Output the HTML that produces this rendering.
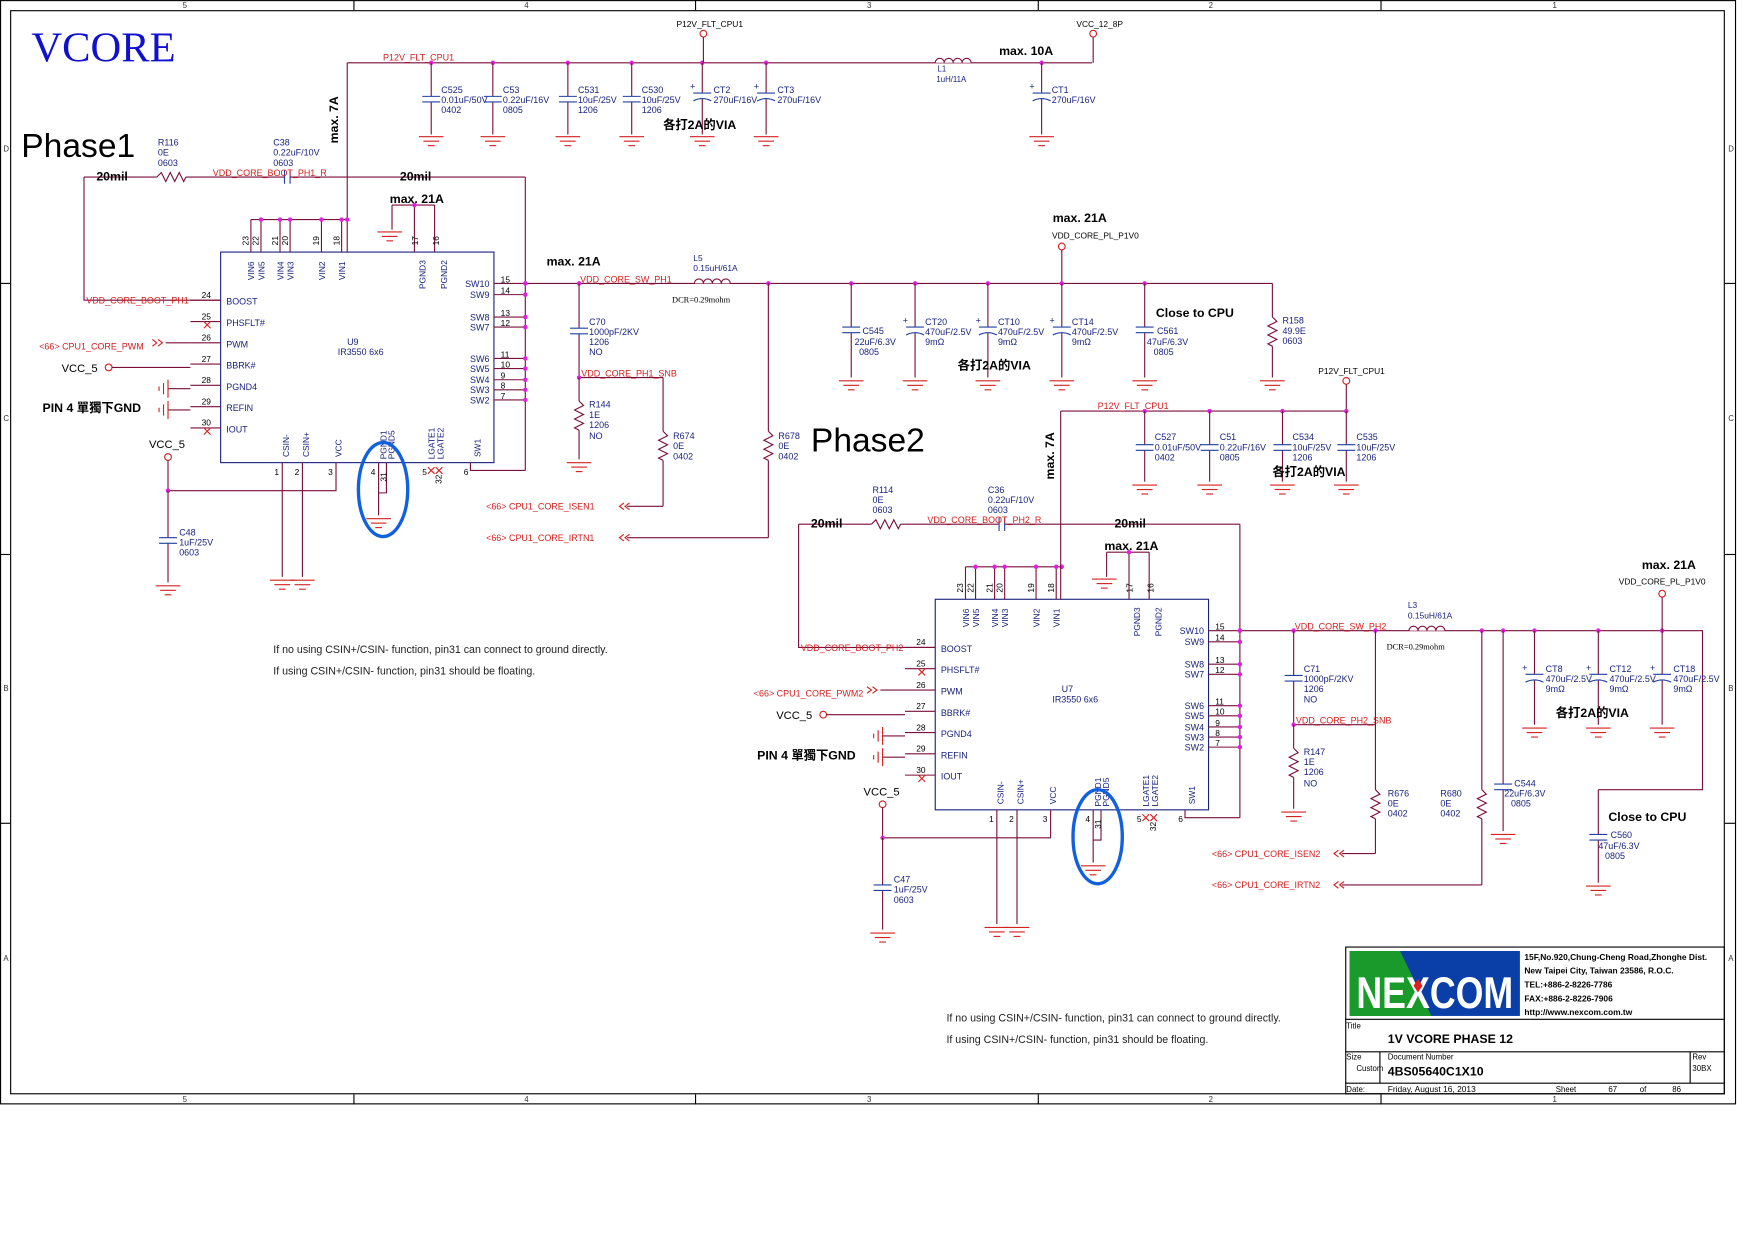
<!DOCTYPE html>
<html><head><meta charset="utf-8">
<style>
html,body{margin:0;padding:0;background:#fff;width:1754px;height:1240px;overflow:hidden}
svg{display:block}
text{font-family:"Liberation Sans","Noto Sans CJK TC",sans-serif}
</style></head>
<body>
<svg id="s" width="1754" height="1240" viewBox="0 0 1566 1107" xmlns="http://www.w3.org/2000/svg"></svg>
<script>
const S=[];
const WC='#7a0f3a',BL='#1a237e',RD='#d42020',MG='#e020e0';
function L(c,...p){let pts=[];for(let i=0;i<p.length;i+=2)pts.push(p[i]+','+p[i+1]);S.push(`<polyline points="${pts.join(' ')}" fill="none" stroke="${c||WC}" stroke-width="1"/>`);}
function W(...p){L(WC,...p);}
function D(x,y){S.push(`<circle cx="${x}" cy="${y}" r="2" fill="${MG}"/>`);}
function T(x,y,s,sz=8,c=BL,w='normal',a='start',f=''){S.push(`<text x="${x}" y="${y}" font-size="${sz}" fill="${c}" font-weight="${w}" text-anchor="${a}" ${f}>${s}</text>`);}
function R(x,y,s,sz=8,c=BL,w='normal'){S.push(`<text x="${x}" y="${y}" font-size="${sz}" fill="${c}" font-weight="${w}" transform="rotate(-90 ${x} ${y})">${s}</text>`);}
function G(x,y){L(RD,x-11,y,x+11,y);L(RD,x-7,y+4,x+7,y+4);L(RD,x-3,y+8,x+3,y+8);}
function CAP(x,y1,y2,ym,pol){W(x,y1,x,ym);W(x,ym+5,x,y2);L('#2040a0',x-8,ym,x+8,ym);
 if(pol){S.push(`<path d="M${x-8} ${ym+7} Q${x} ${ym+3} ${x+8} ${ym+7}" fill="none" stroke="#2040a0"/>`);T(x-11,ym-3,'+',8,BL);}
 else L('#2040a0',x-8,ym+5,x+8,ym+5);}
function RES(x,y1,y2,ym){W(x,y1,x,ym);let p=[x,ym];for(let i=1;i<=6;i++)p.push(x+(i%2?4:-4),ym+i*4);p.push(x,ym+26);L(WC,...p);W(x,ym+26,x,y2);}
function PORT(x,y){S.push(`<circle cx="${x}" cy="${y}" r="3" fill="none" stroke="${RD}"/>`);}
function X(x,y){L(RD,x-3,y-3,x+3,y+3);L(RD,x-3,y+3,x+3,y-3);}
function CAPT(x,y,a,b,c){T(x,y,a);T(x,y+9,b);if(c)T(x,y+18,c);}

S.push(`<rect x="0.5" y="0.5" width="1549" height="985" fill="none" stroke="#000"/>`);
S.push(`<rect x="9.5" y="9.5" width="1530" height="967" fill="none" stroke="#000"/>`);
[['5',165],['4',470],['3',776],['2',1081],['1',1388]].forEach(([t,x])=>{T(x,7,t,7,'#333','normal','middle');T(x,984,t,7,'#333','normal','middle');});
[316,621,927,1233].forEach(x=>{L('#000',x,0,x,9);L('#000',x,977,x,986);});
[['D',135],['C',376],['B',617],['A',858]].forEach(([t,y])=>{T(3,y,t,7,'#333');T(1543,y,t,7,'#333');});
[253,495,735].forEach(y=>{L('#000',0,y,9,y);L('#000',1540,y,1549,y);});

T(28,55,'VCORE',38,'#1010d0','normal','start','style="font-family:\'Liberation Serif\',serif"');
T(19,140,'Phase1',30,'#000');
T(724,403,'Phase2',30,'#000');

W(310,56,975,56);W(310,56,310,225);
R(302,128,'max. 7A',11,'#000','bold');
T(342,54,'P12V_FLT_CPU1',8,RD);
[[385,'C525','0.01uF/50V','0402'],[440,'C53','0.22uF/16V','0805'],[507,'C531','10uF/25V','1206'],[564,'C530','10uF/25V','1206']].forEach(([x,a,b,c])=>{D(x,56);CAP(x,56,120,86);G(x,122);CAPT(x+9,83,a,b,c);});
[[627,'CT2','270uF/16V'],[684,'CT3','270uF/16V']].forEach(([x,a,b])=>{D(x,56);CAP(x,56,120,83,1);G(x,122);CAPT(x+10,83,a,b);});
T(592,115,'各打2A的VIA',11,'#000','bold');
PORT(628,30);W(628,33,628,56);T(604,24,'P12V_FLT_CPU1',7.5,'#000');
PORT(976,30);W(976,33,976,56);T(961,24,'VCC_12_8P',7.5,'#000');
S.push(`<path d="M835 56 a4 4 0 0 1 8 0 a4 4 0 0 1 8 0 a4 4 0 0 1 8 0 a4 4 0 0 1 8 0" fill="#fff" stroke="${WC}"/>`);
T(837,64,'L1',7);T(836,73,'1uH/11A',7);
T(892,49,'max. 10A',11,'#000','bold');
D(930,56);CAP(930,56,120,83,1);G(930,122);CAPT(939,83,'CT1','270uF/16V');

function phase(ox,oy,n){
 const x=v=>v+ox,y=v=>v+oy;
 W(x(75),y(158),x(140),y(158));
 let p=[x(140),y(158)];for(let i=1;i<=6;i++)p.push(x(140)+i*4,y(158)+(i%2?-4:4));p.push(x(166),y(158));L(WC,...p);
 W(x(166),y(158),x(254),y(158));L('#2040a0',x(254),y(152),x(254),y(164));L('#2040a0',x(259),y(152),x(259),y(164));
 W(x(259),y(158),x(469),y(158));
 CAPT(x(141),y(130),n.r,'0E','0603');CAPT(x(244),y(130),n.c,'0.22uF/10V','0603');
 T(x(190),y(157),n.boot+'_R',8,RD);
 T(x(86),y(161),'20mil',11,'#000','bold');T(x(357),y(161),'20mil',11,'#000','bold');
 W(x(75),y(158),x(75),y(268),x(197),y(268));T(x(77),y(271),n.boot,8,RD);
 S.push(`<rect x="${x(197)}" y="${y(225)}" width="244" height="188" fill="none" stroke="${BL}"/>`);
 T(x(315),y(308),n.u,8,BL,'normal','middle');T(x(322),y(317),'IR3550 6x6',8,BL,'normal','middle');
 W(x(224),y(196),x(310),y(196));
 [[224,'23','VIN6'],[233,'22','VIN5'],[250,'21','VIN4'],[259,'20','VIN3'],[287,'19','VIN2'],[305,'18','VIN1']].forEach(([px,nm,lb])=>{W(x(px),y(196),x(px),y(225));if(px>224)D(x(px),y(196));R(x(px)-2,y(219),nm,7.5,'#000');R(x(px)+3,y(250),lb,7.5,BL);});
 D(x(310),y(196));
 W(x(350),y(183),x(388),y(183));W(x(370),y(183),x(370),y(225));W(x(388),y(183),x(388),y(225));D(x(370),y(183));
 W(x(350),y(183),x(350),y(205));G(x(348),y(207));
 R(x(373),y(219),'17',7.5,'#000');R(x(392),y(219),'16',7.5,'#000');
 R(x(380),y(258),'PGND3',7.5,BL);R(x(399),y(258),'PGND2',7.5,BL);
 T(x(348),y(181),'max. 21A',11,'#000','bold');
 W(x(469),y(158),x(469),y(420));
 [[253,'SW10','15'],[263,'SW9','14'],[283,'SW8','13'],[292,'SW7','12'],[320,'SW6','11'],[329,'SW5','10'],[339,'SW4','9'],[348,'SW3','8'],[357,'SW2','7']].forEach(([py,lb,nm])=>{W(x(441),y(py),x(469),y(py));D(x(469),y(py));T(x(437),y(py+3),lb,8,BL,'normal','end');T(x(447),y(py-1),nm,7.5,'#000');});
 W(x(420),y(413),x(420),y(420),x(469),y(420));T(x(414),y(424),'6',7.5,'#000');R(x(429),y(408),'SW1',7.5,BL);
 [[268,'24','BOOST'],[287,'25','PHSFLT#'],[306,'26','PWM'],[325,'27','BBRK#'],[344,'28','PGND4'],[363,'29','REFIN'],[382,'30','IOUT']].forEach(([py,nm,lb])=>{W(x(170),y(py),x(197),y(py));T(x(180),y(py-2),nm,7.5,'#000');T(x(202),y(py+4),lb,8,BL);});
 X(x(185),y(290));X(x(185),y(385));
 W(x(148),y(306),x(170),y(306));T(x(35),y(312),'&lt;66&gt;   '+n.pwm,8,RD);
 L(RD,x(136),y(303),x(140),y(306),x(136),y(309));L(RD,x(141),y(303),x(145),y(306),x(141),y(309));
 T(x(55),y(332),'VCC_5',10,'#000');PORT(x(97),y(328));W(x(100),y(328),x(170),y(328));
 [[347],[366]].forEach(([py])=>{W(x(150),y(py),x(170),y(py));L(RD,x(150),y(py-8),x(150),y(py+8));L(RD,x(146),y(py-5),x(146),y(py+5));L(RD,x(142),y(py-2),x(142),y(py+2));});
 T(x(38),y(368),'PIN 4 單獨下GND',11,'#000','bold');
 T(x(133),y(400),'VCC_5',10,'#000');PORT(x(150),y(408));W(x(150),y(411),x(150),y(438),x(300),y(438),x(300),y(413));D(x(150),y(438));
 CAP(x(150),y(438),y(520),y(480));G(x(150),y(523));CAPT(x(160),y(478),n.cv,'1uF/25V','0603');
 W(x(252),y(413),x(252),y(515));W(x(270),y(413),x(270),y(515));G(x(252),y(518));G(x(270),y(518));
 T(x(245),y(424),'1',7.5,'#000');T(x(263),y(424),'2',7.5,'#000');T(x(293),y(424),'3',7.5,'#000');
 R(x(258),y(408),'CSIN-',7.5,BL);R(x(276),y(408),'CSIN+',7.5,BL);R(x(305),y(408),'VCC',7.5,BL);
 W(x(338),y(413),x(338),y(460));W(x(345),y(413),x(345),y(440),x(338),y(440));G(x(338),y(463));
 T(x(331),y(424),'4',7.5,'#000');R(x(345),y(430),'31',7.5,'#000');
 R(x(345),y(410),'PGND1',7.5,BL);R(x(352),y(410),'PGND5',7.5,BL);
 X(x(385),y(420));X(x(392),y(420));T(x(377),y(424),'5',7.5,'#000');R(x(394),y(432),'32',7.5,'#000');
 R(x(388),y(410),'LGATE1',7.5,BL);R(x(396),y(410),'LGATE2',7.5,BL);
 S.push(`<ellipse cx="${x(342)}" cy="${y(437)}" rx="22" ry="42" fill="none" stroke="#1060e0" stroke-width="3"/>`);
}
phase(0,0,{r:'R116',c:'C38',boot:'VDD_CORE_BOOT_PH1',u:'U9',pwm:'CPU1_CORE_PWM',cv:'C48'});
phase(638,310,{r:'R114',c:'C36',boot:'VDD_CORE_BOOT_PH2',u:'U7',pwm:'CPU1_CORE_PWM2',cv:'C47'});

function inductor(x,y){S.push(`<path d="M${x} ${y} a4 4 0 0 1 8 0 a4 4 0 0 1 8 0 a4 4 0 0 1 8 0 a4 4 0 0 1 8 0" fill="#fff" stroke="${WC}"/>`);}
const SER='style="font-family:\'Liberation Serif\',serif"';
W(469,253,1136,253);inductor(620,253);
T(619,233,'L5',7.5);T(619,242,'0.15uH/61A',7.5);T(600,270,'DCR=0.29mohm',7.5,'#000','normal','start',SER);
T(518,252,'VDD_CORE_SW_PH1',8,RD);T(488,237,'max. 21A',11,'#000','bold');
D(469,253);D(517,253);D(686,253);
CAP(517,253,335,293);T(526,290,'C70');T(526,299,'1000pF/2KV');T(526,308,'1206');T(526,317,'NO');
W(517,337,592,337);T(519,336,'VDD_CORE_PH1_SNB',8,RD);D(517,337);
RES(517,337,410,358);G(517,413);CAPT(526,364,'R144','1E','1206');T(526,392,'NO');
RES(592,337,452,385);W(592,452,560,452);CAPT(601,392,'R674','0E','0402');
RES(686,253,480,385);W(686,480,560,480);CAPT(695,392,'R678','0E','0402');
function arrowL(x,y){L(RD,x+4,y-3,x,y,x+4,y+3);L(RD,x+9,y-3,x+5,y,x+9,y+3);}
arrowL(553,452);arrowL(553,480);
T(434,455,'&lt;66&gt;   CPU1_CORE_ISEN1',8,RD);T(434,483,'&lt;66&gt;   CPU1_CORE_IRTN1',8,RD);
PORT(948,220);W(948,223,948,253);T(964,198,'max. 21A',11,'#000','bold','middle');T(978,213,'VDD_CORE_PL_P1V0',7.5,'#000','normal','middle');
D(760,253);CAP(760,253,337,292);G(760,340);T(770,298,'C545');T(763,308,'22uF/6.3V');T(767,317,'0805');
[[817,'CT20'],[882,'CT10'],[948,'CT14']].forEach(([x,a])=>{D(x,253);CAP(x,253,337,292,1);G(x,340);CAPT(x+9,290,a,'470uF/2.5V','9mΩ');});
T(855,330,'各打2A的VIA',11,'#000','bold');
D(1022,253);CAP(1022,253,337,292);G(1022,340);T(1033,298,'C561');T(1024,308,'47uF/6.3V');T(1030,317,'0805');
T(1032,283,'Close to CPU',11,'#000','bold');
RES(1136,253,337,283);G(1136,340);CAPT(1145,289,'R158','49.9E','0603');

W(947,367,1202,367);W(947,367,947,535);R(941,428,'max. 7A',11,'#000','bold');
T(980,365,'P12V_FLT_CPU1',8,RD);PORT(1202,340);W(1202,343,1202,367);T(1177,334,'P12V_FLT_CPU1',7.5,'#000');
[[1022,'C527','0.01uF/50V','0402'],[1080,'C51','0.22uF/16V','0805'],[1145,'C534','10uF/25V','1206'],[1202,'C535','10uF/25V','1206']].forEach(([x,a,b,c])=>{D(x,367);CAP(x,367,430,397);G(x,433);CAPT(x+9,393,a,b,c);});
T(1136,425,'各打2A的VIA',11,'#000','bold');

W(1107,563,1520,563,1520,705,1427,705);inductor(1258,563);
T(1257,543,'L3',7.5);T(1257,552,'0.15uH/61A',7.5);T(1238,580,'DCR=0.29mohm',7.5,'#000','normal','start',SER);
T(1156,562,'VDD_CORE_SW_PH2',8,RD);
D(1107,563);D(1155,563);D(1228,563);D(1323,563);
CAP(1155,563,645,603);T(1164,600,'C71');T(1164,609,'1000pF/2KV');T(1164,618,'1206');T(1164,627,'NO');
W(1155,647,1228,647);T(1157,646,'VDD_CORE_PH2_SNB',8,RD);D(1155,647);
RES(1155,647,722,668);G(1155,725);CAPT(1164,674,'R147','1E','1206');T(1164,702,'NO');
RES(1228,563,762,705);W(1228,762,1198,762);CAPT(1239,711,'R676','0E','0402');
RES(1323,563,790,705);W(1323,790,1198,790);CAPT(1286,711,'R680','0E','0402');
arrowL(1191,762);arrowL(1191,790);
T(1082,765,'&lt;66&gt;   CPU1_CORE_ISEN2',8,RD);T(1082,793,'&lt;66&gt;   CPU1_CORE_IRTN2',8,RD);
D(1342,563);CAP(1342,563,742,700);G(1342,745);T(1352,702,'C544');T(1343,711,'22uF/6.3V');T(1349,720,'0805');
[[1370,'CT8'],[1427,'CT12'],[1484,'CT18']].forEach(([x,a])=>{D(x,563);CAP(x,563,647,602,1);G(x,650);CAPT(x+10,600,a,'470uF/2.5V','9mΩ');});
PORT(1484,530);W(1484,533,1484,563);T(1490,508,'max. 21A',11,'#000','bold','middle');T(1484,522,'VDD_CORE_PL_P1V0',7.5,'#000','normal','middle');
T(1389,640,'各打2A的VIA',11,'#000','bold');
T(1436,733,'Close to CPU',11,'#000','bold');
CAP(1427,705,788,745);G(1427,791);T(1438,748,'C560');T(1427,758,'47uF/6.3V');T(1433,767,'0805');

T(244,583,'If no using CSIN+/CSIN- function, pin31 can connect to ground directly.',9.5,'#222');
T(244,602,'If using CSIN+/CSIN- function, pin31 should be floating.',9.5,'#222');
T(845,912,'If no using CSIN+/CSIN- function, pin31 can connect to ground directly.',9.5,'#222');
T(845,931,'If using CSIN+/CSIN- function, pin31 should be floating.',9.5,'#222');

S.push(`<rect x="1201.5" y="845.5" width="338" height="131" fill="none" stroke="#000"/>`);
S.push(`<rect x="1205" y="849" width="152" height="58" fill="#0a3fa8"/>`);
S.push(`<polygon points="1205,849 1250,849 1278,907 1205,907" fill="#1a9a2a"/>`);
S.push(`<text x="1281" y="900" font-size="40" font-weight="bold" fill="#fff" text-anchor="middle" textLength="140" lengthAdjust="spacingAndGlyphs">NEXCOM</text>`);
S.push(`<polygon points="1266,874 1270,880 1266,886 1262,880" fill="#e02020"/>`);
['15F,No.920,Chung-Cheng Road,Zhonghe Dist.','New Taipei City, Taiwan 23586, R.O.C.','TEL:+886-2-8226-7786','FAX:+886-2-8226-7906','http://www.nexcom.com.tw'].forEach((t,i)=>T(1361,857+i*12.3,t,7.5,'#000','bold'));
L('#000',1201,910,1539,910);L('#000',1201,939,1539,939);L('#000',1201,967,1539,967);
L('#000',1232,939,1232,967);L('#000',1509,939,1509,967);
T(1202,918,'Title',7,'#000');T(1239,931,'1V VCORE PHASE 12',11,'#000','bold');
T(1202,946,'Size',7,'#000');T(1211,956,'Custom',7,'#000');
T(1239,946,'Document Number',7,'#000');T(1239,960,'4BS05640C1X10',11,'#000','bold');
T(1511,946,'Rev',7,'#000');T(1511,956,'30BX',7,'#000');
T(1202,975,'Date:',7,'#000');T(1239,975,'Friday, August 16, 2013',7.5,'#000');
T(1389,975,'Sheet',7,'#000');T(1436,975,'67',7,'#000');T(1464,975,'of',7,'#000');T(1493,975,'86',7,'#000');

document.getElementById('s').innerHTML=S.join('');
</script>
</body></html>
